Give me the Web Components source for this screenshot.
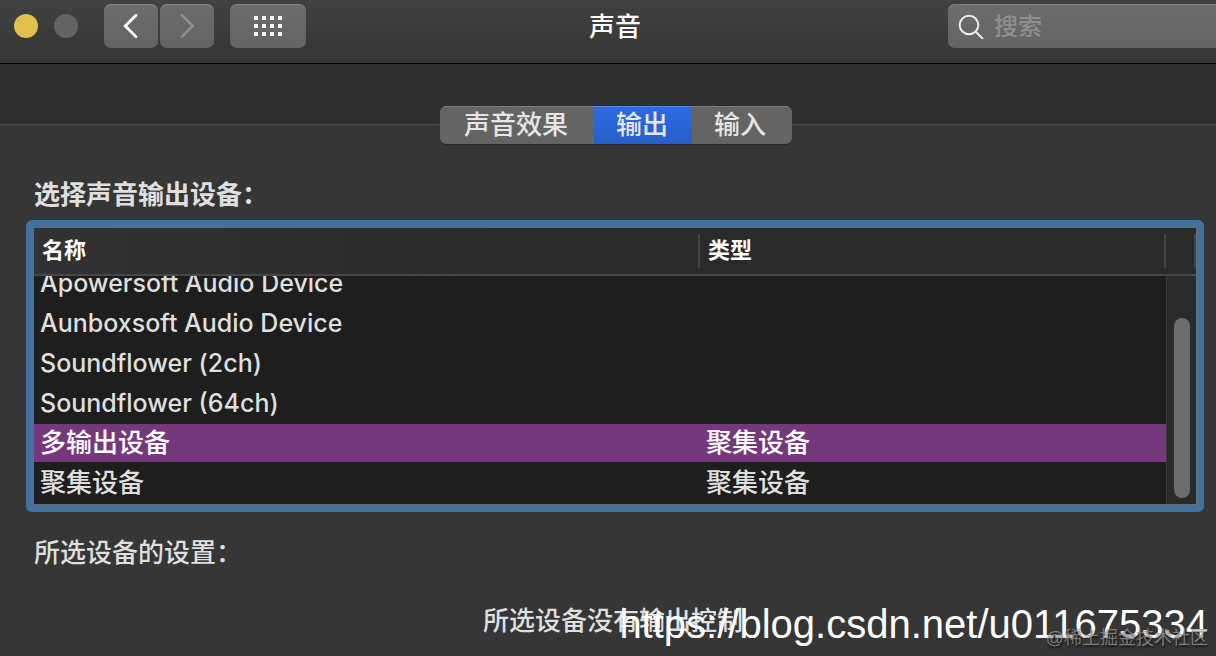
<!DOCTYPE html>
<html lang="zh-CN">
<head>
  <meta charset="utf-8">
  <title>声音</title>
  <style>
    :root {
      --text: #dfdfdf;
      --panel: #363636;
      --control: #646464;
      --accent: #2a66d9;
      --selected: #76387c;
      --ring: #41719c;
    }
    body {
      margin: 0;
      min-height: 100vh;
      overflow: hidden;
      color: var(--text);
      background: var(--panel);
      font: 500 26px/32px Inter, "Noto Sans CJK SC", sans-serif;
    }
  </style>
</head>
<body>
  <sound-window></sound-window>

  <script>
    class TitleBar extends HTMLElement {
      constructor() {
        super();
        this.attachShadow({ mode: "open" }).innerHTML = `
          <style>
            :host {
              display: flex;
              align-items: flex-start;
              box-sizing: border-box;
              height: 64px;
              padding: 4px 0 0 14px;
              background: linear-gradient(#414141, #353535);
              border-bottom: 1px solid #000;
            }
            .lights, .nav {
              display: flex;
              align-items: center;
              height: 44px;
            }
            .lights {
              gap: 16px;
              margin-right: 26px;
            }
            .nav {
              gap: 2px;
              margin-right: 16px;
            }
            button {
              display: flex;
              align-items: center;
              justify-content: center;
              width: 54px;
              height: 44px;
              padding: 0;
              border: 0;
              border-radius: 7px;
              color: #fff;
              background: linear-gradient(#6d6d6d, #636363);
              box-shadow: inset 0 1px #808080;
            }
            button:disabled {
              color: #8f8f8f;
            }
            .light {
              width: 24px;
              height: 24px;
              border-radius: 50%;
              background: #636363;
              box-shadow: none;
            }
            .minimize {
              background: #e1c04c;
            }
            .all {
              width: 76px;
            }
            h1 {
              flex: 1;
              margin: 0 24px 0 0;
              color: #fff;
              font-size: 26px;
              font-weight: 500;
              line-height: 46px;
              text-align: center;
            }
          </style>
          <div class="lights">
            <button class="light minimize" aria-label="最小化"></button>
            <button class="light" aria-label="缩放" disabled></button>
          </div>
          <div class="nav">
            <button aria-label="后退">
              <svg width="54" height="44" fill="none" stroke="currentColor" stroke-width="2.8" stroke-linecap="round" stroke-linejoin="miter">
                <path d="M32 11.3 21.3 22 32 32.7"/>
              </svg>
            </button>
            <button aria-label="前进" disabled>
              <svg width="54" height="44" fill="none" stroke="currentColor" stroke-width="2.6" stroke-linecap="round" stroke-linejoin="miter">
                <path d="M22 11.3 32.7 22 22 32.7"/>
              </svg>
            </button>
          </div>
          <button class="all" aria-label="显示全部">
            <svg width="28" height="20" fill="currentColor">
              <path d="M0 0h4v4H0zM8 0h4v4H8zM16 0h4v4h-4zM24 0h4v4h-4zM0 8h4v4H0zM8 8h4v4H8zM16 8h4v4h-4zM24 8h4v4h-4zM0 16h4v4H0zM8 16h4v4H8zM16 16h4v4h-4zM24 16h4v4h-4z"/>
            </svg>
          </button>
          <h1><slot></slot></h1>
          <search-field></search-field>
        `;
      }
    }

    class SearchField extends HTMLElement {
      constructor() {
        super();
        this.attachShadow({ mode: "open" }).innerHTML = `
          <style>
            :host {
              display: block;
              width: 268px;
            }
            label {
              display: flex;
              align-items: center;
              gap: 10px;
              height: 44px;
              padding-left: 10px;
              border-radius: 7px 0 0 7px;
              background: linear-gradient(#6d6d6d, #636363);
              box-shadow: inset 0 1px #808080;
            }
            svg {
              flex: none;
            }
            input {
              flex: 1;
              min-width: 0;
              height: 44px;
              padding: 0;
              border: 0;
              outline: 0;
              color: #fff;
              background: none;
              font: inherit;
              font-size: 24px;
            }
            input::placeholder {
              color: #8f8f8f;
              opacity: 1;
            }
          </style>
          <label>
            <svg width="26" height="26" fill="none" stroke="#ececec" stroke-width="2">
              <circle cx="11" cy="12" r="9.3"/>
              <path d="M17.7 18.7 25 26"/>
            </svg>
            <input type="text" placeholder="搜索" aria-label="搜索">
          </label>
        `;
      }
    }

    class TabStrip extends HTMLElement {
      constructor() {
        super();
        this.attachShadow({ mode: "open" }).innerHTML = `
          <style>
            :host {
              display: flex;
              justify-content: center;
              padding: 42px 0 0 16px;
              background: linear-gradient(#2f2f2f 60px, #4b4b4b 60px, #4b4b4b 61px, var(--panel) 61px);
            }
            .tabs {
              display: flex;
              overflow: hidden;
              border-radius: 6px;
              background: var(--control);
              box-shadow: 0 1px 1px #262626;
            }
            ::slotted(button) {
              height: 38px;
              padding: 0 24px 0 22px;
              border: 0;
              color: #e6e6e6;
              background: none;
              box-shadow: inset 0 1px #7c7c7c;
              font: inherit;
              line-height: 38px;
            }
            ::slotted(button:first-child) {
              padding: 0 26px 0 24px;
            }
            ::slotted(button:last-child) {
              padding: 0 26px 0 22px;
            }
            ::slotted(button[aria-selected="true"]) {
              background: linear-gradient(#2d6be0, #255fc9);
              box-shadow: inset 0 1px #5088e8;
            }
          </style>
          <div class="tabs" role="tablist"><slot></slot></div>
        `;
      }
    }

    class DeviceTable extends HTMLElement {
      connectedCallback() {
        const devices = [
          ["Apowersoft Audio Device", ""],
          ["Aunboxsoft Audio Device", ""],
          ["Soundflower (2ch)", ""],
          ["Soundflower (64ch)", ""],
          ["多输出设备", "聚集设备"],
          ["聚集设备", "聚集设备"]
        ];
        const selected = 4;
        const rows = devices.map(([name, type], i) => `
          <tr${i === selected ? ' class="selected"' : ""}${type ? "" : ' lang="en"'}><td>${name}</td><td>${type}</td></tr>`).join("");

        this.attachShadow({ mode: "open" }).innerHTML = `
          <style>
            :host {
              display: block;
              border: 7px solid var(--ring);
              border-radius: 6px;
              background: var(--ring);
            }
            .frame {
              display: grid;
              grid-template-columns: 1fr 30px;
              grid-template-rows: auto 1fr;
              border: 1px solid #646e76;
              background: #1e1e1e;
            }
            table {
              display: block;
              grid-area: 1 / 1 / 3 / 2;
            }
            thead, tbody {
              display: flex;
              flex-direction: column;
            }
            tr {
              display: grid;
              grid-template-columns: 10fr 7fr;
            }
            thead tr, .corner {
              padding: 6px 0;
              border-bottom: 2px solid #474747;
              background: #2a2a2a;
            }
            thead tr {
              background: linear-gradient(90deg, #323234, #2a2a2a 40%);
            }
            th, .corner::before {
              height: 34px;
              border-right: 2px solid #444;
              box-sizing: border-box;
            }
            th {
              padding: 0 8px;
              color: #fff;
              font-size: 22px;
              font-weight: 700;
              line-height: 32px;
              text-align: left;
            }
            .corner::before {
              content: "";
              display: block;
            }
            /* the list is scrolled to its end */
            tbody {
              justify-content: flex-end;
              height: 228px;
              overflow: hidden;
            }
            tbody tr {
              flex: none;
              height: 38px;
              margin-bottom: 2px;
            }
            td {
              padding: 0 6px;
              line-height: 38px;
            }
            [lang="en"] {
              font-size: 25px;
            }
            .selected {
              color: #fff;
              background: var(--selected);
            }
            .track {
              display: flex;
              align-items: flex-end;
              justify-content: center;
              padding-bottom: 6px;
              border-left: 1px solid #3c3c3c;
              background: #2b2b2b;
            }
            .thumb {
              width: 16px;
              height: 180px;
              border-radius: 8px;
              background: #6c6c6c;
            }
          </style>
          <div class="frame">
            <table>
              <thead><tr><th>名称</th><th>类型</th></tr></thead>
              <tbody>${rows}</tbody>
            </table>
            <div class="corner"></div>
            <div class="track"><div class="thumb"></div></div>
          </div>
        `;
      }
    }

    class WaterMark extends HTMLElement {
      constructor() {
        super();
        this.attachShadow({ mode: "open" }).innerHTML = `
          <style>
            :host {
              position: absolute;
              right: 8px;
              bottom: 8px;
              white-space: nowrap;
              color: #fff;
              font: 40px/48px "Liberation Sans", sans-serif;
            }
            :host([small]) {
              color: rgba(150, 150, 150, .75);
              font: 18px/20px "Liberation Sans", "Noto Sans CJK SC", sans-serif;
              text-shadow: 1px 2px 2px rgba(0, 0, 0, .6);
            }
          </style>
          <slot></slot>
        `;
      }
    }

    class SoundWindow extends HTMLElement {
      constructor() {
        super();
        this.attachShadow({ mode: "open" }).innerHTML = `
          <style>
            :host {
              display: block;
              position: relative;
              min-height: 100vh;
            }
            main {
              padding: 35px 12px 0 26px;
            }
            h2, p {
              margin: 0;
              font-size: 26px;
              font-weight: 500;
            }
            h2 {
              padding-left: 8px;
            }
            h2.choose {
              margin-bottom: 9px;
              font-weight: 700;
            }
            h2.settings {
              margin: 25px 0 36px;
            }
            p {
              padding-right: 4px;
              text-align: center;
            }
          </style>
          <title-bar>声音</title-bar>
          <tab-strip>
            <button role="tab">声音效果</button>
            <button role="tab" aria-selected="true">输出</button>
            <button role="tab">输入</button>
          </tab-strip>
          <main>
            <h2 class="choose">选择声音输出设备：</h2>
            <device-table></device-table>
            <h2 class="settings">所选设备的设置：</h2>
            <p>所选设备没有输出控制</p>
          </main>
          <water-mark>https://blog.csdn.net/u011675334</water-mark>
          <water-mark small>@稀土掘金技术社区</water-mark>
        `;
      }
    }

    customElements.define("search-field", SearchField);
    customElements.define("title-bar", TitleBar);
    customElements.define("tab-strip", TabStrip);
    customElements.define("device-table", DeviceTable);
    customElements.define("water-mark", WaterMark);
    customElements.define("sound-window", SoundWindow);
  </script>
</body>
</html>
